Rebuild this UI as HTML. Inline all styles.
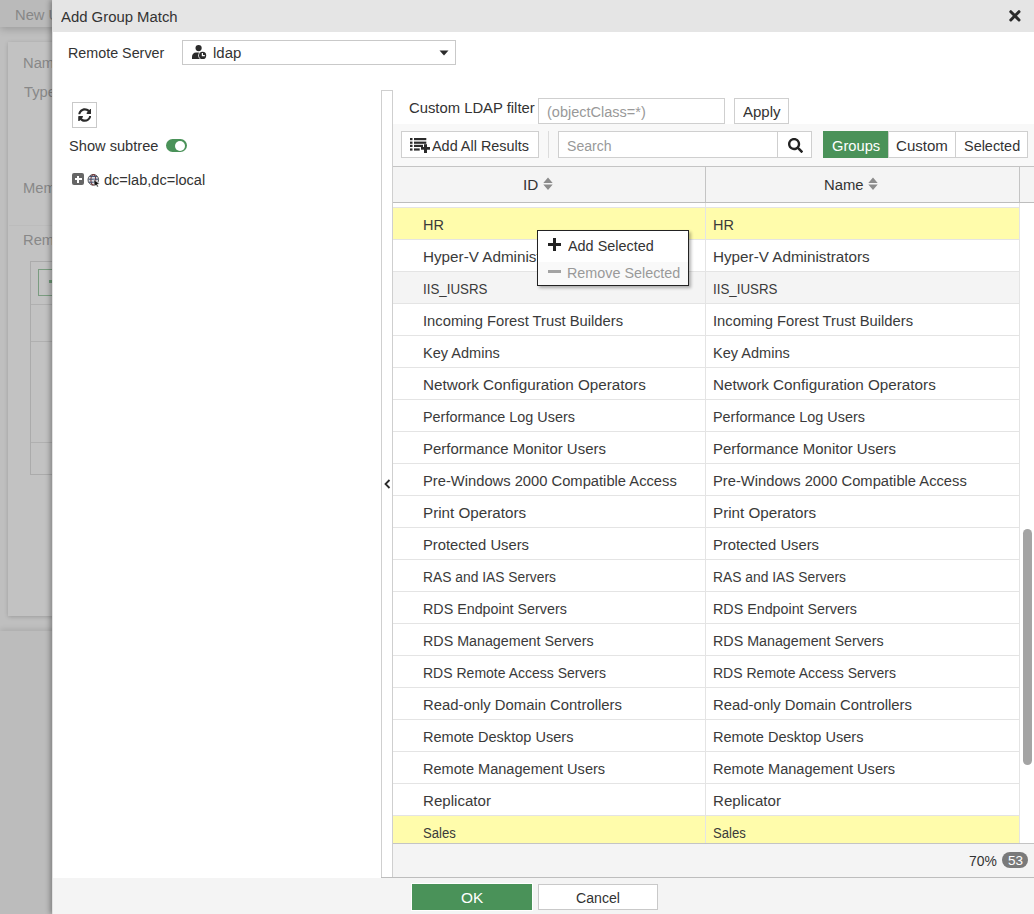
<!DOCTYPE html>
<html><head><meta charset="utf-8"><style>
*{box-sizing:border-box;margin:0;padding:0}
html,body{width:1034px;height:914px;overflow:hidden;background:#bfbfbf;font-family:"Liberation Sans", sans-serif;}
.a{position:absolute}
.t{position:absolute;line-height:1;white-space:nowrap}
</style></head><body>
<div class="a" style="left:0;top:0;width:1034px;height:27px;background:#bababa;box-shadow:0 2px 8px rgba(0,0,0,0.2)"></div>
<div class="t" style="left:14.75px;top:7.00px;font-size:15.5px;color:#878787;transform:scaleX(0.9500);transform-origin:0 0;">New User</div>
<div class="a" style="left:8px;top:42px;width:1100px;height:574px;background:#c2c2c2;box-shadow:0 1px 4px rgba(0,0,0,0.18)"></div>
<div class="t" style="left:22.95px;top:55.00px;font-size:15.5px;color:#888;transform:scaleX(0.9500);transform-origin:0 0;">Name</div>
<div class="t" style="left:23.90px;top:84.00px;font-size:15.5px;color:#888;transform:scaleX(0.9500);transform-origin:0 0;">Type</div>
<div class="t" style="left:22.95px;top:180.00px;font-size:15.5px;color:#888;transform:scaleX(0.9500);transform-origin:0 0;">Members</div>
<div class="a" style="left:9px;top:225px;width:1100px;height:1px;background:#bcbcbc"></div>
<div class="t" style="left:22.95px;top:232.00px;font-size:15.5px;color:#888;transform:scaleX(0.9500);transform-origin:0 0;">Remote Groups</div>
<div class="a" style="left:30px;top:261px;width:1100px;height:214px;border:1px solid #ababab"></div>
<div class="a" style="left:38px;top:269px;width:60px;height:27px;border:1px solid #7a9c80"></div>
<div class="a" style="left:49px;top:280px;width:6px;height:3px;background:#6f9a78"></div>
<div class="a" style="left:31px;top:304px;width:1100px;height:1px;background:#b0b0b0"></div>
<div class="a" style="left:31px;top:341px;width:1100px;height:1px;background:#b0b0b0"></div>
<div class="a" style="left:31px;top:442px;width:1100px;height:1px;background:#b0b0b0"></div>
<div class="a" style="left:0;top:631px;width:1034px;height:283px;background:#bcbcbc;box-shadow:0 -2px 5px rgba(0,0,0,0.10)"></div>
<div class="a" style="left:52px;top:0;width:1000px;height:914px;background:#fff;border-left:1px solid #e2e2e2;box-shadow:-2px 0 5px rgba(0,0,0,0.32)"></div>
<div class="a" style="left:53px;top:0;width:990px;height:32px;background:#e5e5e5"></div>
<div class="t" style="left:60.90px;top:9.00px;font-size:15.5px;color:#333;transform:scaleX(0.9598);transform-origin:0 0;">Add Group Match</div>
<svg class="a" style="left:1008px;top:9px" width="14" height="14" viewBox="0 0 14 14"><path d="M2.8 2.7L11 11M11 2.7L2.8 11" stroke="#2a2a2a" stroke-width="3" stroke-linecap="round"/></svg>
<div class="t" style="left:68.38px;top:45.00px;font-size:15.5px;color:#333;transform:scaleX(0.9236);transform-origin:0 0;">Remote Server</div>
<div class="a" style="left:182px;top:40px;width:274px;height:25px;border:1px solid #c9c9c9;background:#fff"></div>
<svg class="a" style="left:192px;top:45px" width="15" height="14" viewBox="0 0 15 14"><circle cx="6.6" cy="3.1" r="3.1" fill="#2b2b2b"/><path d="M0 14V11.6C0 9.4 1.8 7.6 4 7.6H9C10 7.6 10.8 8 11.4 8.6V14Z" fill="#2b2b2b"/><circle cx="10.6" cy="10.4" r="4.4" fill="#fff"/><circle cx="10.6" cy="10.4" r="3.6" fill="#2b2b2b"/><path d="M10.4 8V10.7H12.8" stroke="#fff" stroke-width="1.2" fill="none"/></svg>
<div class="t" style="left:212.74px;top:45.00px;font-size:15.5px;color:#333;transform:scaleX(0.9644);transform-origin:0 0;">ldap</div>
<svg class="a" style="left:439px;top:50px" width="10" height="6" viewBox="0 0 10 6"><path d="M0.5 0.5H9.5L5 5.5Z" fill="#2b2b2b"/></svg>
<div class="a" style="left:72px;top:102px;width:25px;height:26px;border:1px solid #c9c9c9;background:#fff"></div>
<svg class="a" style="left:77.6px;top:107.9px" width="13.6" height="14" viewBox="0 0 512 512" preserveAspectRatio="none"><path fill="#2b2b2b" d="M370.72 133.28C339.458 104.008 298.888 87.962 255.848 88c-77.458.068-144.328 53.178-162.791 126.85-1.344 5.363-6.122 9.15-11.651 9.15H24.103c-7.498 0-13.194-6.807-11.807-14.176C33.933 94.924 134.813 8 256 8c66.448 0 126.791 26.136 171.315 68.685L463.03 40.97C478.149 25.851 504 36.559 504 57.941V192c0 13.255-10.745 24-24 24H345.941c-21.382 0-32.09-25.851-16.971-40.971l41.75-41.749zM32 296h134.059c21.382 0 32.09 25.851 16.971 40.971l-41.75 41.75c31.262 29.273 71.835 45.319 114.876 45.28 77.418-.07 144.315-53.144 162.787-126.849 1.344-5.363 6.122-9.15 11.651-9.15h57.304c7.498 0 13.194 6.807 11.807 14.176C478.067 417.076 377.187 504 256 504c-66.448 0-126.791-26.136-171.315-68.685L48.97 471.03C33.851 486.149 8 475.441 8 454.059V320c0-13.255 10.745-24 24-24z"/></svg>
<div class="t" style="left:69.30px;top:138.00px;font-size:15.5px;color:#333;transform:scaleX(0.9431);transform-origin:0 0;">Show subtree</div>
<div class="a" style="left:166px;top:139px;width:20.5px;height:13px;border-radius:6.5px;background:#4a9259"></div>
<div class="a" style="left:174.8px;top:140.5px;width:10px;height:10px;border-radius:5px;background:#fff"></div>
<div class="a" style="left:72px;top:173px;width:12px;height:12px;border-radius:2px;background:#666"></div>
<div class="a" style="left:74.5px;top:178px;width:7px;height:2px;background:#fff"></div>
<div class="a" style="left:77px;top:175.5px;width:2px;height:7px;background:#fff"></div>
<svg class="a" style="left:86.5px;top:172.5px" width="14" height="14" viewBox="0 0 14 14"><circle cx="6.3" cy="6.8" r="5.3" fill="#dfe3ea" stroke="#555" stroke-width="1"/><ellipse cx="6.3" cy="6.8" rx="2.4" ry="5.2" fill="none" stroke="#7a3a3a" stroke-width="1.1"/><path d="M2.6 3.4H10M1.4 6.2H11.2M1.8 9.2H8" stroke="#3a4a6a" stroke-width="1"/><path d="M6.8 6.6L12.6 11L10.2 11.3L11.4 13.4L10.2 14L9.1 11.9L7.4 13.3Z" fill="#111" stroke="#fff" stroke-width="0.5"/></svg>
<div class="t" style="left:103.70px;top:172.00px;font-size:15.5px;color:#333;transform:scaleX(0.9388);transform-origin:0 0;">dc=lab,dc=local</div>
<div class="a" style="left:381px;top:90px;width:12px;height:788px;border:1px solid #cfcfcf;border-bottom:none;background:#fff"></div>
<svg class="a" style="left:384px;top:479px" width="7" height="10" viewBox="0 0 7 10"><path d="M5.5 1L1.5 5L5.5 9" stroke="#2b2b2b" stroke-width="1.8" fill="none"/></svg>
<div class="t" style="left:408.90px;top:100.00px;font-size:15.5px;color:#333;transform:scaleX(0.9557);transform-origin:0 0;">Custom LDAP filter</div>
<div class="a" style="left:538px;top:98px;width:187px;height:26px;border:1px solid #cfcfcf;background:#fff"></div>
<div class="t" style="left:547.00px;top:104.00px;font-size:15.5px;color:#999;transform:scaleX(0.9358);transform-origin:0 0;">(objectClass=*)</div>
<div class="a" style="left:734px;top:98px;width:55px;height:26px;border:1px solid #cfcfcf;background:#fff"></div>
<div class="t" style="left:743.00px;top:104.00px;font-size:15.5px;color:#333;transform:scaleX(0.9687);transform-origin:0 0;">Apply</div>
<div class="a" style="left:393px;top:124px;width:641px;height:42px;background:#f8f8f8"></div>
<div class="a" style="left:401px;top:131px;width:138px;height:27px;border:1px solid #cfcfcf;background:#fff"></div>
<svg class="a" style="left:409px;top:137px" width="22" height="17" viewBox="0 0 22 17">
<g fill="#2b2b2b"><rect x="1" y="1" width="2.5" height="2.2"/><rect x="5" y="1" width="12.3" height="2.2"/>
<rect x="1" y="4.6" width="2.5" height="2.2"/><rect x="5" y="4.6" width="12.3" height="2.2"/>
<rect x="1" y="7.8" width="2.5" height="2.2"/><rect x="5" y="7.8" width="9" height="2.2"/>
<rect x="1" y="11.4" width="2.5" height="2.2"/><rect x="5" y="11.4" width="5.7" height="2.2"/>
<rect x="15" y="7.2" width="3" height="8.8"/><rect x="12" y="10" width="9" height="2.7"/></g></svg>
<div class="t" style="left:432.00px;top:138.00px;font-size:15.5px;color:#333;transform:scaleX(0.9302);transform-origin:0 0;">Add All Results</div>
<div class="a" style="left:548px;top:131px;width:1px;height:27px;background:#dcdcdc"></div>
<div class="a" style="left:558px;top:131px;width:254px;height:27px;border:1px solid #cfcfcf;background:#fff"></div>
<div class="a" style="left:777px;top:132px;width:1px;height:25px;background:#cfcfcf"></div>
<div class="t" style="left:566.60px;top:138.00px;font-size:15.5px;color:#999;transform:scaleX(0.9074);transform-origin:0 0;">Search</div>
<svg class="a" style="left:787.5px;top:138px" width="15" height="15" viewBox="0 0 512 512"><path fill="#222" d="M505 442.7L405.3 343c-4.5-4.5-10.6-7-17-7H372c27.6-35.3 44-79.7 44-128C416 93.1 322.9 0 208 0S0 93.1 0 208s93.1 208 208 208c48.3 0 92.7-16.4 128-44v16.3c0 6.4 2.5 12.5 7 17l99.7 99.7c9.4 9.4 24.6 9.4 33.9 0l28.3-28.3c9.4-9.4 9.4-24.6.1-34zM208 336c-70.7 0-128-57.2-128-128 0-70.7 57.2-128 128-128 70.7 0 128 57.2 128 128 0 70.7-57.2 128-128 128z"/></svg>
<div class="a" style="left:888px;top:131px;width:140px;height:27px;border:1px solid #cfcfcf;background:#fff"></div>
<div class="a" style="left:955px;top:132px;width:1px;height:25px;background:#cfcfcf"></div>
<div class="a" style="left:823px;top:131px;width:65px;height:27px;background:#4a9259"></div>
<div class="t" style="left:831.60px;top:138.00px;font-size:15.5px;color:#fff;transform:scaleX(0.9475);transform-origin:0 0;">Groups</div>
<div class="t" style="left:896.00px;top:138.00px;font-size:15.5px;color:#333;transform:scaleX(0.9716);transform-origin:0 0;">Custom</div>
<div class="t" style="left:963.60px;top:138.00px;font-size:15.5px;color:#333;transform:scaleX(0.9313);transform-origin:0 0;">Selected</div>
<div class="a" style="left:393px;top:166px;width:641px;height:37px;background:#f4f4f4;border-top:1px solid #c4c4c4;border-bottom:1px solid #bdbdbd"></div>
<div class="a" style="left:705px;top:167px;width:1px;height:35px;background:#c4c4c4"></div>
<div class="a" style="left:1019px;top:167px;width:1px;height:35px;background:#c4c4c4"></div>
<div class="t" style="left:523.01px;top:177.00px;font-size:15.5px;color:#333;transform:scaleX(0.9856);transform-origin:0 0;">ID</div>
<div class="t" style="left:824.04px;top:177.00px;font-size:15.5px;color:#333;transform:scaleX(0.9566);transform-origin:0 0;">Name</div>
<svg class="a" style="left:543px;top:177px" width="10" height="13" viewBox="0 0 10 13"><path d="M0.3 6.1L5 0.6L9.7 6.1Z M0.3 7.6L5 13L9.7 7.6Z" fill="#8c8c8c"/></svg>
<svg class="a" style="left:868px;top:177px" width="10" height="13" viewBox="0 0 10 13"><path d="M0.3 6.1L5 0.6L9.7 6.1Z M0.3 7.6L5 13L9.7 7.6Z" fill="#8c8c8c"/></svg>
<div class="a" style="left:393px;top:203px;width:626px;height:640px;overflow:hidden;background:#fff">
<div class="a" style="left:312px;top:0;width:1px;height:640px;background:#e4e4e4"></div>
<div class="a" style="left:0;top:4px;width:626px;height:32px;border-top:1px solid #e4e4e4;background:#fffcab"></div>
<div class="a" style="left:312px;top:5px;width:1px;height:31px;background:#e4e4e4"></div>
<div class="t" style="left:29.87px;top:14.00px;font-size:15.5px;color:#3a3a3a;transform:scaleX(0.9342);transform-origin:0 0;">HR</div>
<div class="t" style="left:319.87px;top:14.00px;font-size:15.5px;color:#3a3a3a;transform:scaleX(0.9342);transform-origin:0 0;">HR</div>
<div class="a" style="left:0;top:36px;width:626px;height:32px;border-top:1px solid #e4e4e4;background:#fff"></div>
<div class="a" style="left:312px;top:37px;width:1px;height:31px;background:#e4e4e4"></div>
<div class="t" style="left:29.82px;top:46.00px;font-size:15.5px;color:#3a3a3a;transform:scaleX(0.9827);transform-origin:0 0;">Hyper-V Administrators</div>
<div class="t" style="left:319.82px;top:46.00px;font-size:15.5px;color:#3a3a3a;transform:scaleX(0.9827);transform-origin:0 0;">Hyper-V Administrators</div>
<div class="a" style="left:0;top:68px;width:626px;height:32px;border-top:1px solid #e4e4e4;background:#f4f4f4"></div>
<div class="a" style="left:312px;top:69px;width:1px;height:31px;background:#e4e4e4"></div>
<div class="t" style="left:29.94px;top:78.00px;font-size:15.5px;color:#3a3a3a;transform:scaleX(0.8600);transform-origin:0 0;">IIS_IUSRS</div>
<div class="t" style="left:319.94px;top:78.00px;font-size:15.5px;color:#3a3a3a;transform:scaleX(0.8600);transform-origin:0 0;">IIS_IUSRS</div>
<div class="a" style="left:0;top:100px;width:626px;height:32px;border-top:1px solid #e4e4e4;background:#fff"></div>
<div class="a" style="left:312px;top:101px;width:1px;height:31px;background:#e4e4e4"></div>
<div class="t" style="left:29.85px;top:110.00px;font-size:15.5px;color:#3a3a3a;transform:scaleX(0.9518);transform-origin:0 0;">Incoming Forest Trust Builders</div>
<div class="t" style="left:319.85px;top:110.00px;font-size:15.5px;color:#3a3a3a;transform:scaleX(0.9518);transform-origin:0 0;">Incoming Forest Trust Builders</div>
<div class="a" style="left:0;top:132px;width:626px;height:32px;border-top:1px solid #e4e4e4;background:#fff"></div>
<div class="a" style="left:312px;top:133px;width:1px;height:31px;background:#e4e4e4"></div>
<div class="t" style="left:29.86px;top:142.00px;font-size:15.5px;color:#3a3a3a;transform:scaleX(0.9384);transform-origin:0 0;">Key Admins</div>
<div class="t" style="left:319.86px;top:142.00px;font-size:15.5px;color:#3a3a3a;transform:scaleX(0.9384);transform-origin:0 0;">Key Admins</div>
<div class="a" style="left:0;top:164px;width:626px;height:32px;border-top:1px solid #e4e4e4;background:#fff"></div>
<div class="a" style="left:312px;top:165px;width:1px;height:31px;background:#e4e4e4"></div>
<div class="t" style="left:29.82px;top:174.00px;font-size:15.5px;color:#3a3a3a;transform:scaleX(0.9831);transform-origin:0 0;">Network Configuration Operators</div>
<div class="t" style="left:319.82px;top:174.00px;font-size:15.5px;color:#3a3a3a;transform:scaleX(0.9831);transform-origin:0 0;">Network Configuration Operators</div>
<div class="a" style="left:0;top:196px;width:626px;height:32px;border-top:1px solid #e4e4e4;background:#fff"></div>
<div class="a" style="left:312px;top:197px;width:1px;height:31px;background:#e4e4e4"></div>
<div class="t" style="left:29.87px;top:206.00px;font-size:15.5px;color:#3a3a3a;transform:scaleX(0.9280);transform-origin:0 0;">Performance Log Users</div>
<div class="t" style="left:319.87px;top:206.00px;font-size:15.5px;color:#3a3a3a;transform:scaleX(0.9280);transform-origin:0 0;">Performance Log Users</div>
<div class="a" style="left:0;top:228px;width:626px;height:32px;border-top:1px solid #e4e4e4;background:#fff"></div>
<div class="a" style="left:312px;top:229px;width:1px;height:31px;background:#e4e4e4"></div>
<div class="t" style="left:29.83px;top:238.00px;font-size:15.5px;color:#3a3a3a;transform:scaleX(0.9653);transform-origin:0 0;">Performance Monitor Users</div>
<div class="t" style="left:319.83px;top:238.00px;font-size:15.5px;color:#3a3a3a;transform:scaleX(0.9653);transform-origin:0 0;">Performance Monitor Users</div>
<div class="a" style="left:0;top:260px;width:626px;height:32px;border-top:1px solid #e4e4e4;background:#fff"></div>
<div class="a" style="left:312px;top:261px;width:1px;height:31px;background:#e4e4e4"></div>
<div class="t" style="left:29.85px;top:270.00px;font-size:15.5px;color:#3a3a3a;transform:scaleX(0.9503);transform-origin:0 0;">Pre-Windows 2000 Compatible Access</div>
<div class="t" style="left:319.85px;top:270.00px;font-size:15.5px;color:#3a3a3a;transform:scaleX(0.9503);transform-origin:0 0;">Pre-Windows 2000 Compatible Access</div>
<div class="a" style="left:0;top:292px;width:626px;height:32px;border-top:1px solid #e4e4e4;background:#fff"></div>
<div class="a" style="left:312px;top:293px;width:1px;height:31px;background:#e4e4e4"></div>
<div class="t" style="left:29.82px;top:302.00px;font-size:15.5px;color:#3a3a3a;transform:scaleX(0.9814);transform-origin:0 0;">Print Operators</div>
<div class="t" style="left:319.82px;top:302.00px;font-size:15.5px;color:#3a3a3a;transform:scaleX(0.9814);transform-origin:0 0;">Print Operators</div>
<div class="a" style="left:0;top:324px;width:626px;height:32px;border-top:1px solid #e4e4e4;background:#fff"></div>
<div class="a" style="left:312px;top:325px;width:1px;height:31px;background:#e4e4e4"></div>
<div class="t" style="left:29.85px;top:334.00px;font-size:15.5px;color:#3a3a3a;transform:scaleX(0.9540);transform-origin:0 0;">Protected Users</div>
<div class="t" style="left:319.85px;top:334.00px;font-size:15.5px;color:#3a3a3a;transform:scaleX(0.9540);transform-origin:0 0;">Protected Users</div>
<div class="a" style="left:0;top:356px;width:626px;height:32px;border-top:1px solid #e4e4e4;background:#fff"></div>
<div class="a" style="left:312px;top:357px;width:1px;height:31px;background:#e4e4e4"></div>
<div class="t" style="left:29.91px;top:366.00px;font-size:15.5px;color:#3a3a3a;transform:scaleX(0.8922);transform-origin:0 0;">RAS and IAS Servers</div>
<div class="t" style="left:319.91px;top:366.00px;font-size:15.5px;color:#3a3a3a;transform:scaleX(0.8922);transform-origin:0 0;">RAS and IAS Servers</div>
<div class="a" style="left:0;top:388px;width:626px;height:32px;border-top:1px solid #e4e4e4;background:#fff"></div>
<div class="a" style="left:312px;top:389px;width:1px;height:31px;background:#e4e4e4"></div>
<div class="t" style="left:29.88px;top:398.00px;font-size:15.5px;color:#3a3a3a;transform:scaleX(0.9221);transform-origin:0 0;">RDS Endpoint Servers</div>
<div class="t" style="left:319.88px;top:398.00px;font-size:15.5px;color:#3a3a3a;transform:scaleX(0.9221);transform-origin:0 0;">RDS Endpoint Servers</div>
<div class="a" style="left:0;top:420px;width:626px;height:32px;border-top:1px solid #e4e4e4;background:#fff"></div>
<div class="a" style="left:312px;top:421px;width:1px;height:31px;background:#e4e4e4"></div>
<div class="t" style="left:29.88px;top:430.00px;font-size:15.5px;color:#3a3a3a;transform:scaleX(0.9216);transform-origin:0 0;">RDS Management Servers</div>
<div class="t" style="left:319.88px;top:430.00px;font-size:15.5px;color:#3a3a3a;transform:scaleX(0.9216);transform-origin:0 0;">RDS Management Servers</div>
<div class="a" style="left:0;top:452px;width:626px;height:32px;border-top:1px solid #e4e4e4;background:#fff"></div>
<div class="a" style="left:312px;top:453px;width:1px;height:31px;background:#e4e4e4"></div>
<div class="t" style="left:29.90px;top:462.00px;font-size:15.5px;color:#3a3a3a;transform:scaleX(0.9041);transform-origin:0 0;">RDS Remote Access Servers</div>
<div class="t" style="left:319.90px;top:462.00px;font-size:15.5px;color:#3a3a3a;transform:scaleX(0.9041);transform-origin:0 0;">RDS Remote Access Servers</div>
<div class="a" style="left:0;top:484px;width:626px;height:32px;border-top:1px solid #e4e4e4;background:#fff"></div>
<div class="a" style="left:312px;top:485px;width:1px;height:31px;background:#e4e4e4"></div>
<div class="t" style="left:29.84px;top:494.00px;font-size:15.5px;color:#3a3a3a;transform:scaleX(0.9581);transform-origin:0 0;">Read-only Domain Controllers</div>
<div class="t" style="left:319.84px;top:494.00px;font-size:15.5px;color:#3a3a3a;transform:scaleX(0.9581);transform-origin:0 0;">Read-only Domain Controllers</div>
<div class="a" style="left:0;top:516px;width:626px;height:32px;border-top:1px solid #e4e4e4;background:#fff"></div>
<div class="a" style="left:312px;top:517px;width:1px;height:31px;background:#e4e4e4"></div>
<div class="t" style="left:29.86px;top:526.00px;font-size:15.5px;color:#3a3a3a;transform:scaleX(0.9387);transform-origin:0 0;">Remote Desktop Users</div>
<div class="t" style="left:319.86px;top:526.00px;font-size:15.5px;color:#3a3a3a;transform:scaleX(0.9387);transform-origin:0 0;">Remote Desktop Users</div>
<div class="a" style="left:0;top:548px;width:626px;height:32px;border-top:1px solid #e4e4e4;background:#fff"></div>
<div class="a" style="left:312px;top:549px;width:1px;height:31px;background:#e4e4e4"></div>
<div class="t" style="left:29.86px;top:558.00px;font-size:15.5px;color:#3a3a3a;transform:scaleX(0.9395);transform-origin:0 0;">Remote Management Users</div>
<div class="t" style="left:319.86px;top:558.00px;font-size:15.5px;color:#3a3a3a;transform:scaleX(0.9395);transform-origin:0 0;">Remote Management Users</div>
<div class="a" style="left:0;top:580px;width:626px;height:32px;border-top:1px solid #e4e4e4;background:#fff"></div>
<div class="a" style="left:312px;top:581px;width:1px;height:31px;background:#e4e4e4"></div>
<div class="t" style="left:29.83px;top:590.00px;font-size:15.5px;color:#3a3a3a;transform:scaleX(0.9735);transform-origin:0 0;">Replicator</div>
<div class="t" style="left:319.83px;top:590.00px;font-size:15.5px;color:#3a3a3a;transform:scaleX(0.9735);transform-origin:0 0;">Replicator</div>
<div class="a" style="left:0;top:612px;width:626px;height:32px;border-top:1px solid #e4e4e4;background:#fffcab"></div>
<div class="a" style="left:312px;top:613px;width:1px;height:31px;background:#e4e4e4"></div>
<div class="t" style="left:29.80px;top:622.00px;font-size:15.5px;color:#3a3a3a;transform:scaleX(0.8457);transform-origin:0 0;">Sales</div>
<div class="t" style="left:320.10px;top:622.00px;font-size:15.5px;color:#3a3a3a;transform:scaleX(0.8457);transform-origin:0 0;">Sales</div>
</div>
<div class="a" style="left:1019px;top:203px;width:1px;height:640px;background:#e4e4e4"></div>
<div class="a" style="left:1023px;top:529px;width:9px;height:236px;border-radius:4.5px;background:#a4a4a4"></div>
<div class="a" style="left:393px;top:843px;width:641px;height:35px;background:#f4f4f4;border-top:1px solid #c4c4c4;border-bottom:1px solid #bdbdbd"></div>
<div class="t" style="left:969.00px;top:853.00px;font-size:15.5px;color:#333;transform:scaleX(0.8963);transform-origin:0 0;">70%</div>
<div class="a" style="left:1002px;top:852px;width:26px;height:16px;border-radius:8px;background:#7a7a7a"></div>
<div class="t" style="left:1008.00px;top:854.00px;font-size:13.5px;color:#fff;">53</div>
<div class="a" style="left:537px;top:230px;width:152px;height:56px;border:1px solid #222;background:#fff;box-shadow:2px 2px 3px rgba(0,0,0,0.3)"></div>
<div class="a" style="left:538px;top:262px;width:150px;height:23px;background:#f9f9f9"></div>
<svg class="a" style="left:548px;top:238px" width="13" height="13" viewBox="0 0 13 13"><path d="M5 0H8V5H13V8H8V13H5V8H0V5H5Z" fill="#222"/></svg>
<div class="t" style="left:567.90px;top:238.00px;font-size:15.5px;color:#333;transform:scaleX(0.9292);transform-origin:0 0;">Add Selected</div>
<div class="a" style="left:548px;top:270px;width:13px;height:3px;background:#a3a3a3"></div>
<div class="t" style="left:567.07px;top:265.00px;font-size:15.5px;color:#999;transform:scaleX(0.9261);transform-origin:0 0;">Remove Selected</div>
<div class="a" style="left:53px;top:878px;width:990px;height:36px;background:#f4f4f4"></div>
<div class="a" style="left:381px;top:877px;width:653px;height:1px;background:#bdbdbd"></div>
<div class="a" style="left:412px;top:884px;width:120px;height:26px;background:#4a9259;outline:1px solid #fff"></div>
<div class="t" style="left:461.00px;top:890.00px;font-size:15.5px;color:#fff;transform:scaleX(0.9932);transform-origin:0 0;">OK</div>
<div class="a" style="left:538px;top:884px;width:120px;height:26px;border:1px solid #c9c9c9;background:#fff"></div>
<div class="t" style="left:575.80px;top:890.00px;font-size:15.5px;color:#333;transform:scaleX(0.9100);transform-origin:0 0;">Cancel</div>
</body></html>
